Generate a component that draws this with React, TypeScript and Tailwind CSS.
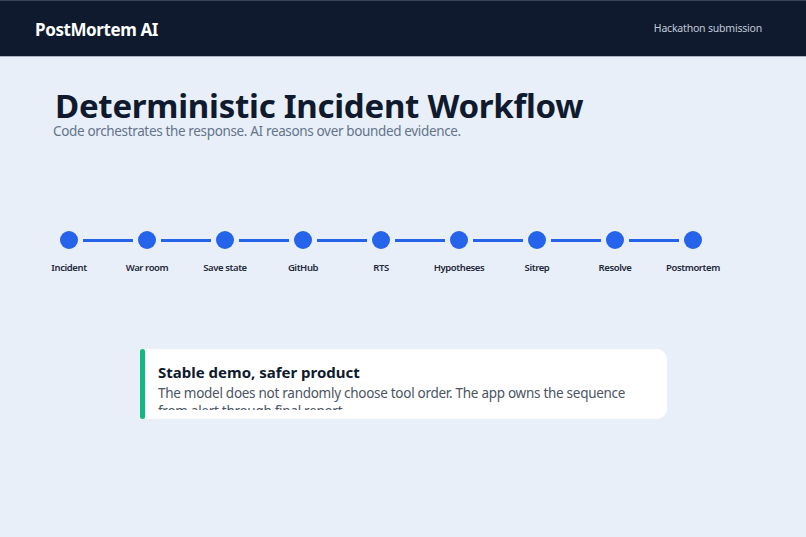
const steps = ["Incident", "War room", "Save state", "GitHub", "RTS", "Hypotheses", "Sitrep", "Resolve", "Postmortem"];

export default function App() {
  return (
    <div className="h-[537px] w-[806px] overflow-hidden bg-[#e8eff8] font-['Noto_Sans','Open_Sans',sans-serif]">
      <header className="flex h-[57px] items-center justify-between border-t border-b border-t-[#3a4558] border-b-[#a9b3c2] bg-[#0f1a2e] pl-[35px] pr-[44px]">
        <div className="pt-[2px] text-[17px] font-bold tracking-[-0.4px] text-white">PostMortem AI</div>
        <div className="pt-[1px] text-[10.5px] tracking-[-0.2px] text-[#c2cad6]">Hackathon submission</div>
      </header>

      <main className="pl-[53px] pt-[33px]">
        <h1 className="ml-[2px] text-[33px] leading-[32px] font-bold tracking-[-0.26px] whitespace-nowrap text-[#0f1a2e]">Deterministic Incident Workflow</h1>
        <p className="text-[13.5px] leading-[18px] tracking-[-0.35px] text-[#64748b]">Code orchestrates the response. AI reasons over bounded evidence.</p>

        <div className="mt-[91px] -ml-[23px] flex">
          {steps.map((step, i) => (
            <div key={step} className="relative flex w-[78px] flex-col items-center">
              <div className="h-[18px] w-[18px] rounded-full bg-[#2563eb]" />
              {i < steps.length - 1 && (
                <div className="absolute left-[53px] top-[8px] h-[3px] w-[50px] bg-[#2563eb]" />
              )}
              <div className="mt-[12px] text-[9.5px] font-semibold tracking-[-0.4px] whitespace-nowrap text-[#1e293b]">{step}</div>
            </div>
          ))}
        </div>

        <div className="mt-[74px] ml-[87px] flex h-[70px] w-[527px]">
          <div className="w-[5px] rounded-[3px] bg-[#10b981]" />
          <div className="flex-1 rounded-r-[10px] bg-white pl-[13px] pt-[13px] pb-[9px]">
            <div className="h-full overflow-hidden">
              <div className="text-[15px] leading-[20px] font-bold text-[#0f1a2e]">Stable demo, safer product</div>
              <p className="mt-[2px] w-[490px] text-[13.5px] leading-[18px] tracking-[-0.28px] text-[#4b5563]">
                The model does not randomly choose tool order. The app owns the sequence from alert through final report.
              </p>
            </div>
          </div>
        </div>
      </main>
    </div>
  );
}
